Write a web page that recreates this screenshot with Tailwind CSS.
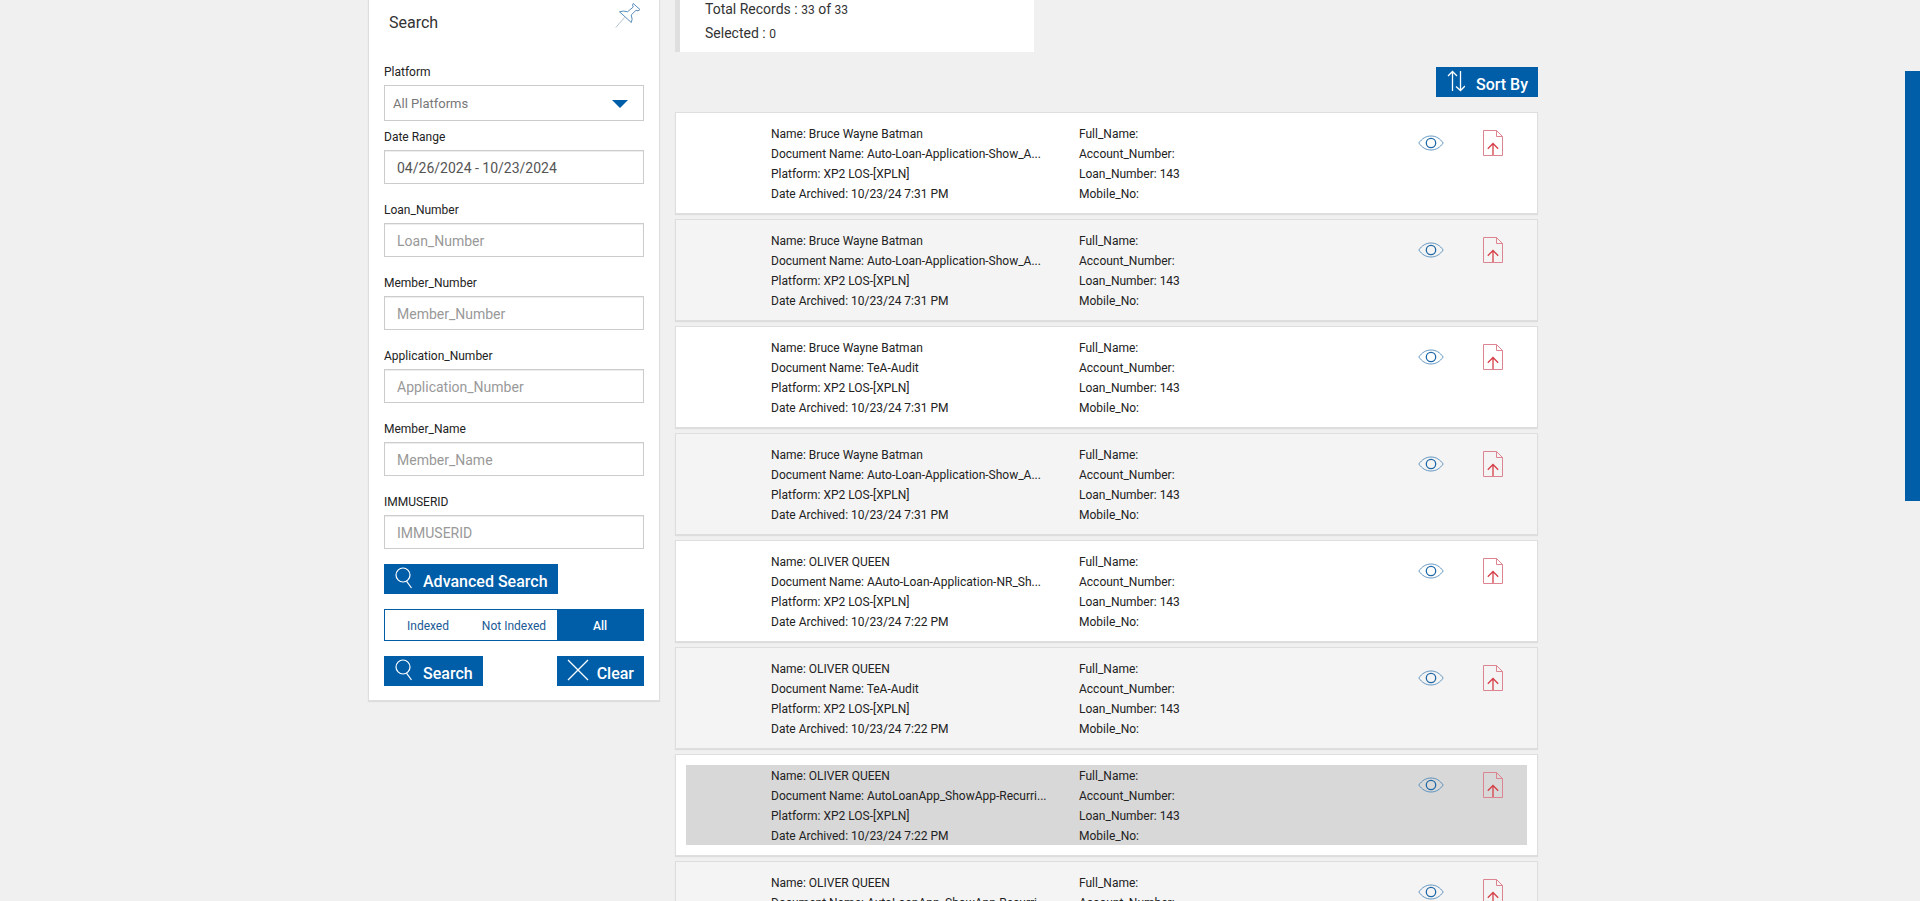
<!DOCTYPE html>
<html lang="en">
<head>
<meta charset="utf-8">
<meta name="viewport" content="width=device-width, initial-scale=1">
<title>Document Search</title>
<script src="https://cdn.jsdelivr.net/npm/@tailwindcss/browser@4"></script>
</head>
<body class="h-screen overflow-hidden bg-[#f0f0f0] font-['Roboto',sans-serif] text-xs leading-5 text-[#222]">

<svg class="hidden" aria-hidden="true">
  <symbol id="i-search" viewBox="0 0 18 22"><g fill="none" stroke="currentColor" stroke-width="1.2"><circle cx="8" cy="8" r="7"/><path d="M11.5 14.2 16.5 21"/></g></symbol>
  <symbol id="i-clear" viewBox="0 0 22 22"><path d="M1 1 21 21M21 1 1 21" fill="none" stroke="currentColor" stroke-width="1.3"/></symbol>
  <symbol id="i-sort" viewBox="0 0 18 22"><path d="M5.5 21V2M1 6 5.5 1.5 10 6M13.5 1V20M9 16.500 13.500 20.500 18 16" fill="none" stroke="currentColor" stroke-width="1.3"/></symbol>
  <symbol id="i-eye" viewBox="0 0 26 16"><path d="M.8 8C4 3.500 8 1 13 1s9 2.500 12.200 7C22 12.500 18 15 13 15S4 12.500 .8 8Z" fill="none" stroke="#3f7fb5" stroke-width=".8"/><circle cx="13" cy="8" r="4.700" fill="none" stroke="#1f68a8" stroke-width="1.300"/></symbol>
  <symbol id="i-file" viewBox="0 0 20 26"><path d="M13.500 .5H.5v25h19V6.500ZM13.500 .5v6h6" fill="none" stroke="#dc8590" stroke-width="1"/><path d="M10 25V14M4.800 18.700 10 13.500l5.200 5.200" fill="none" stroke="#d63f48" stroke-width="1.300"/></symbol>
  <symbol id="i-pin" viewBox="0 0 26 26"><path d="M18.200 .5 25 6.500 23 7.800 21 7.300 16.200 12Q18 16.500 16.300 19.500L4.500 8.800Q8.500 7.300 12.500 8.800L18.300 4 17.500 2.200Z" fill="none" stroke="#4880b0" stroke-width=".9"/><path d="M9.500 14.500.8 24.500" fill="none" stroke="#a5b3c0" stroke-width=".8"/></symbol>
</svg>

<div class="pr-3.5">
  <main class="mx-auto flex max-w-[1170px] items-start gap-[15px]">

    <form class="w-[292px] shrink-0 border-x border-b border-[#dedede] bg-white px-[15px] pb-3.5 shadow-[0_1px_1px_rgba(0,0,0,0.08)]" onsubmit="return false">
      <div class="flex h-[62px] items-start justify-between pt-[3px] pl-[5px] pr-[3px]">
        <h2 class="pt-[10px] text-base leading-5 text-[#333]">Search</h2>
        <button type="button" aria-label="Pin panel"><svg class="h-[26px] w-[26px]"><use href="#i-pin"/></svg></button>
      </div>

      <label for="platform" class="mb-[3px] block">Platform</label>
      <div class="relative mb-1.5">
        <select id="platform" class="block h-9 w-full appearance-none border border-[#ccc] bg-white px-2 pt-0.5 text-[13px] text-[#777]"><option>All Platforms</option></select>
        <svg class="pointer-events-none absolute top-[15px] right-4 h-2 w-4" viewBox="0 0 16 8"><path d="M0 0H16L8 8Z" fill="#005da8"/></svg>
      </div>

      <label for="dates" class="mb-[3px] block">Date Range</label>
      <input id="dates" type="text" value="04/26/2024 - 10/23/2024" class="mb-4 block h-[34px] w-full border border-[#ccc] px-3 pt-0.5 text-sm text-[#555] shadow-[inset_0_1px_1px_rgba(0,0,0,0.075)]">

      <label for="loan" class="mb-[3px] block">Loan_Number</label>
      <input id="loan" type="text" placeholder="Loan_Number" class="mb-4 block h-[34px] w-full border border-[#ccc] px-3 pt-0.5 text-sm shadow-[inset_0_1px_1px_rgba(0,0,0,0.075)] placeholder:text-[#999]">

      <label for="member" class="mb-[3px] block">Member_Number</label>
      <input id="member" type="text" placeholder="Member_Number" class="mb-4 block h-[34px] w-full border border-[#ccc] px-3 pt-0.5 text-sm shadow-[inset_0_1px_1px_rgba(0,0,0,0.075)] placeholder:text-[#999]">

      <label for="application" class="mb-[3px] block">Application_Number</label>
      <input id="application" type="text" placeholder="Application_Number" class="mb-4 block h-[34px] w-full border border-[#ccc] px-3 pt-0.5 text-sm shadow-[inset_0_1px_1px_rgba(0,0,0,0.075)] placeholder:text-[#999]">

      <label for="name" class="mb-[3px] block">Member_Name</label>
      <input id="name" type="text" placeholder="Member_Name" class="mb-4 block h-[34px] w-full border border-[#ccc] px-3 pt-0.5 text-sm shadow-[inset_0_1px_1px_rgba(0,0,0,0.075)] placeholder:text-[#999]">

      <label for="userid" class="mb-[3px] block">IMMUSERID</label>
      <input id="userid" type="text" placeholder="IMMUSERID" class="mb-[15px] block h-[34px] w-full border border-[#ccc] px-3 pt-0.5 text-sm shadow-[inset_0_1px_1px_rgba(0,0,0,0.075)] placeholder:text-[#999]">

      <button type="button" class="flex h-[30px] items-start gap-2.5 bg-[#005da8] pr-2.5 pl-[11px] text-base font-medium text-white"><svg class="mt-[3px] h-[22px] w-[18px]"><use href="#i-search"/></svg><span class="pt-2 leading-5">Advanced Search</span></button>

      <div class="my-[15px] grid h-8 grid-cols-3 border border-[#005da8] text-[#1a5a96]">
        <button type="button" class="pt-0.5">Indexed</button>
        <button type="button" class="pt-0.5 whitespace-nowrap">Not Indexed</button>
        <button type="button" class="bg-[#005da8] pt-0.5 font-medium text-white">All</button>
      </div>

      <div class="flex justify-between">
        <button type="submit" class="flex h-[30px] items-start gap-2.5 bg-[#005da8] pr-2.5 pl-[11px] text-base font-medium text-white"><svg class="mt-[3px] h-[22px] w-[18px]"><use href="#i-search"/></svg><span class="pt-2 leading-5">Search</span></button>
        <button type="reset" class="flex h-[30px] items-start gap-2 bg-[#005da8] px-2.5 text-base font-medium text-white"><svg class="mt-[3px] h-[22px] w-[22px]"><use href="#i-clear"/></svg><span class="pt-2 leading-5">Clear</span></button>
      </div>
    </form>

    <section class="min-w-0 flex-1">
      <div class="h-[52px] max-w-[359px] border-l-[5px] border-[#dfdfdf] bg-white pl-[25px] text-sm text-[#333]">
        <p class="h-6 leading-[18px]">Total Records : <span class="text-xs leading-none">33</span> of <span class="text-xs leading-none">33</span></p>
        <p class="leading-[18px]">Selected : <span class="text-xs leading-none">0</span></p>
      </div>

      <div class="my-[15px] flex justify-end">
        <button type="button" class="flex h-[30px] items-start gap-[11px] bg-[#005da8] pr-2.5 pl-[11px] text-base font-medium text-white"><svg class="mt-[3px] h-[22px] w-[18px]"><use href="#i-sort"/></svg><span class="pt-2 leading-5">Sort By</span></button>
      </div>

      <ul id="results" class="flex flex-col gap-[5px]"></ul>
    </section>
  </main>
</div>

<aside class="fixed top-[71px] right-0 h-[430px] w-[15px] bg-[#005da8]"></aside>

<script>
  const records = [
    ["Bruce Wayne Batman", "Auto-Loan-Application-Show_A...", "7:31"],
    ["Bruce Wayne Batman", "Auto-Loan-Application-Show_A...", "7:31"],
    ["Bruce Wayne Batman", "TeA-Audit", "7:31"],
    ["Bruce Wayne Batman", "Auto-Loan-Application-Show_A...", "7:31"],
    ["OLIVER QUEEN", "AAuto-Loan-Application-NR_Sh...", "7:22"],
    ["OLIVER QUEEN", "TeA-Audit", "7:22"],
    ["OLIVER QUEEN", "AutoLoanApp_ShowApp-Recurri...", "7:22", true],
    ["OLIVER QUEEN", "AutoLoanApp_ShowApp-Recurri...", "7:22"]
  ];
  document.getElementById("results").innerHTML = records.map(([name, doc, time, active], i) => `
    <li class="border border-[#dedede] p-2.5 shadow-[0_1px_1px_rgba(0,0,0,0.08)] ${i % 2 ? "bg-[#f4f4f4]" : "bg-white"}">
      <div class="flex items-start pl-[85px] pr-6 ${active ? "bg-[#d8d8d8]" : ""}">
        <div class="w-[308px] shrink-0 pt-px -mb-px whitespace-nowrap">
          <p>Name: ${name}</p><p>Document Name: ${doc}</p><p>Platform: XP2 LOS-[XPLN]</p><p>Date Archived: 10/23/24 ${time} PM</p>
        </div>
        <div class="flex-1 pt-px -mb-px">
          <p>Full_Name:</p><p>Account_Number:</p><p>Loan_Number: 143</p><p>Mobile_No:</p>
        </div>
        <div class="flex items-center gap-[39px] pt-[7px]">
          <button type="button" aria-label="View"><svg class="h-4 w-[26px]"><use href="#i-eye"/></svg></button>
          <button type="button" aria-label="Export"><svg class="h-[26px] w-5"><use href="#i-file"/></svg></button>
        </div>
      </div>
    </li>`).join("");
</script>
</body>
</html>
